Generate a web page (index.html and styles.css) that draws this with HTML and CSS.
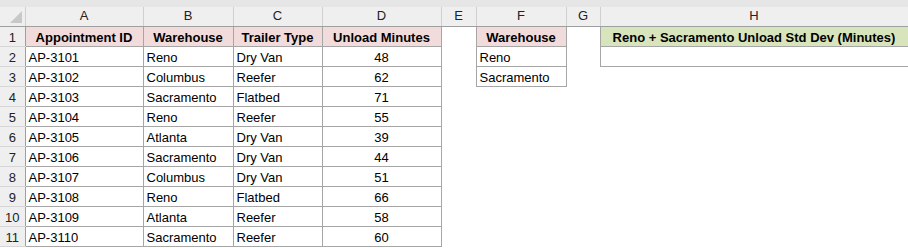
FILE: index.html
```html
<!DOCTYPE html>
<html>
<head>
<meta charset="utf-8">
<link rel="stylesheet" href="styles.css">
</head>
<body>
<div class="topband"></div>
<table class="sheet">
  <colgroup>
    <col class="c-rh"><col class="c-a"><col class="c-b"><col class="c-c"><col class="c-d"><col class="c-e"><col class="c-f"><col class="c-g"><col class="c-h">
  </colgroup>
  <thead>
    <tr class="colhead">
      <th class="corner"><span class="tri"></span></th><th>A</th><th>B</th><th>C</th><th>D</th><th>E</th><th>F</th><th>G</th><th>H</th>
    </tr>
  </thead>
  <tbody>
    <tr><th>1</th><td class="b hd pink">Appointment ID</td><td class="b hd pink">Warehouse</td><td class="b hd pink">Trailer Type</td><td class="b hd pink">Unload Minutes</td><td></td><td class="b hd pink">Warehouse</td><td></td><td class="b hd green">Reno + Sacramento Unload Std Dev (Minutes)</td></tr>
    <tr><th>2</th><td class="b">AP-3101</td><td class="b">Reno</td><td class="b">Dry Van</td><td class="b num">48</td><td></td><td class="b">Reno</td><td></td><td class="b"></td></tr>
    <tr><th>3</th><td class="b">AP-3102</td><td class="b">Columbus</td><td class="b">Reefer</td><td class="b num">62</td><td></td><td class="b">Sacramento</td><td></td><td></td></tr>
    <tr><th>4</th><td class="b">AP-3103</td><td class="b">Sacramento</td><td class="b">Flatbed</td><td class="b num">71</td><td></td><td></td><td></td><td></td></tr>
    <tr><th>5</th><td class="b">AP-3104</td><td class="b">Reno</td><td class="b">Reefer</td><td class="b num">55</td><td></td><td></td><td></td><td></td></tr>
    <tr><th>6</th><td class="b">AP-3105</td><td class="b">Atlanta</td><td class="b">Dry Van</td><td class="b num">39</td><td></td><td></td><td></td><td></td></tr>
    <tr><th>7</th><td class="b">AP-3106</td><td class="b">Sacramento</td><td class="b">Dry Van</td><td class="b num">44</td><td></td><td></td><td></td><td></td></tr>
    <tr><th>8</th><td class="b">AP-3107</td><td class="b">Columbus</td><td class="b">Dry Van</td><td class="b num">51</td><td></td><td></td><td></td><td></td></tr>
    <tr><th>9</th><td class="b">AP-3108</td><td class="b">Reno</td><td class="b">Flatbed</td><td class="b num">66</td><td></td><td></td><td></td><td></td></tr>
    <tr><th>10</th><td class="b">AP-3109</td><td class="b">Atlanta</td><td class="b">Reefer</td><td class="b num">58</td><td></td><td></td><td></td><td></td></tr>
    <tr><th>11</th><td class="b">AP-3110</td><td class="b">Sacramento</td><td class="b">Reefer</td><td class="b num">60</td><td></td><td></td><td></td><td></td></tr>
  </tbody>
</table>
</body>
</html>
```
FILE: styles.css
```css
html, body {
  margin: 0;
  padding: 0;
  background: #ffffff;
  overflow: hidden;
}
body {
  width: 908px;
  height: 248px;
  font-family: "Liberation Sans", Arial, sans-serif;
  font-size: 13px;
  color: #000;
}
.topband {
  height: 7px;
  background: #e6e6e6;
}
.sheet {
  border-collapse: collapse;
  table-layout: fixed;
  width: 908px;
}
.c-rh { width: 25px; }
.c-a { width: 118px; }
.c-b { width: 90px; }
.c-c { width: 89px; }
.c-d { width: 119px; }
.c-e { width: 35px; }
.c-f { width: 90px; }
.c-g { width: 34px; }
.c-h { width: 308px; }

.sheet tbody tr { height: 20px; }
.sheet thead tr { height: 19px; }

.sheet th, .sheet td {
  padding: 2px 0 0 3px;
  white-space: nowrap;
  overflow: hidden;
  line-height: 17px;
  font-weight: normal;
  text-align: left;
}
.colhead th {
  padding: 0;
  background: #efefef;
  text-align: center;
  color: #222;
  border-right: 1px solid #d0d0d0;
  border-bottom: 1px solid #9f9f9f;
  line-height: 18px;
}
.colhead th.corner {
  position: relative;
}
.tri {
  position: absolute;
  right: 3px;
  bottom: 3px;
  width: 0;
  height: 0;
  border-left: 12px solid transparent;
  border-bottom: 12px solid #c8c8c8;
}
tbody th {
  background: #efefef;
  text-align: center !important;
  padding: 2px 0 0 0 !important;
  color: #222;
  border-right: 1px solid #9f9f9f;
  border-bottom: 1px solid #d6d6d6;
}
td.b {
  border: 1px solid #a6a6a6;
}
td.hd {
  font-weight: bold;
  text-align: center;
  padding-left: 0;
}
td.pink { background: #f2dcdb; }
td.green { background: #d8e4bc; }
td.num {
  text-align: center;
  padding-left: 0;
}
```
